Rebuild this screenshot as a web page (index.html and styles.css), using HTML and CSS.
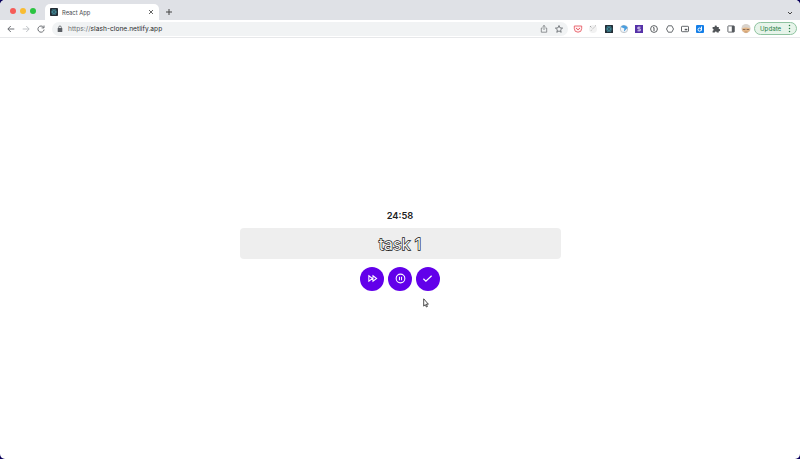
FILE: index.html
```html
<!DOCTYPE html>
<html lang="en">
<head>
<meta charset="utf-8">
<title>React App</title>
<link rel="stylesheet" href="styles.css">
</head>
<body>
<div class="window">
  <header class="tabs">
    <div class="lights"><i class="red"></i><i class="yellow"></i><i class="green"></i></div>
    <div class="tab">
      <svg class="favicon" viewBox="0 0 10 10"><rect width="10" height="10" rx="1" fill="#252d35"/><g fill="none" stroke="#4fa9b8" stroke-width=".6"><ellipse cx="5" cy="5" rx="3.6" ry="1.4"/><ellipse cx="5" cy="5" rx="3.6" ry="1.4" transform="rotate(60 5 5)"/><ellipse cx="5" cy="5" rx="3.6" ry="1.4" transform="rotate(120 5 5)"/></g></svg>
      <span class="tab-title">React App</span>
      <svg class="close" viewBox="0 0 6 6"><path d="M1 1l4 4M5 1L1 5" stroke="#555" stroke-width=".9"/></svg>
    </div>
    <svg class="plus" viewBox="0 0 8 8"><path d="M4 1v6M1 4h6" stroke="#444" stroke-width="1"/></svg>
    <svg class="chevron" viewBox="0 0 6 6"><path d="M1 2l2 2 2-2" fill="none" stroke="#444"/></svg>
  </header>
  <nav class="toolbar">
    <div class="nav">
      <svg viewBox="0 0 10 10"><path d="M8.3 5H2M4.8 2L1.8 5l3 3" fill="none" stroke="#5b5f64" stroke-width=".9"/></svg>
      <svg viewBox="0 0 10 10"><path d="M1.7 5H8M5.2 2l3 3-3 3" fill="none" stroke="#b8bbbf" stroke-width=".9"/></svg>
      <svg viewBox="0 0 10 10"><path d="M7.5 3.2A3.1 3.1 0 1 0 8.1 5.6M8 1.5v2.4H5.6" fill="none" stroke="#5b5f64" stroke-width=".9"/></svg>
    </div>
    <div class="address">
      <svg class="lock" viewBox="0 0 6 8"><rect x=".7" y="3" width="4.6" height="4" rx=".6" fill="#5b5f64"/><path d="M1.7 3.2V2.3a1.3 1.3 0 0 1 2.6 0v.9" fill="none" stroke="#5b5f64" stroke-width=".8"/></svg>
      <span class="url"><span class="scheme">https://</span>slash-clone.netlify.app</span>
      <svg class="share" viewBox="0 0 10 10"><path d="M3.6 4H2.3v4.2h5.4V4H6.4M5 6V1.5M3.5 2.8L5 1.4l1.5 1.4" fill="none" stroke="#777b7f" stroke-width=".8"/></svg>
      <svg class="star" viewBox="0 0 10 10"><path d="M5 1.5l1 2.4 2.6.2-2 1.7.6 2.5L5 6.9 2.8 8.3l.6-2.5-2-1.7L4 3.9z" fill="none" stroke="#5b5f64" stroke-width=".8"/></svg>
    </div>
    <div class="extensions">
      <svg viewBox="0 0 10 10"><path d="M1.3 2h7.4v2.6a3.7 3.6 0 0 1-7.4 0z" fill="#fff0f1" stroke="#e75c66" stroke-width=".9"/><path d="M3 4l2 1.8L7 4" fill="none" stroke="#e75c66"/></svg>
      <svg viewBox="0 0 10 10"><circle cx="5" cy="5" r="4" fill="#f2f2f2"/><path d="M2 2l1.3 1.4M6.8 2.4l1-.8M5 4.5l1-1M3.2 6.5l.6-.7" stroke="#999" stroke-width=".9"/></svg>
      <svg viewBox="0 0 10 10"><rect x="1" y="1" width="8" height="8" rx=".5" fill="#222c35"/><g fill="none" stroke="#4598a8" stroke-width=".6"><ellipse cx="5" cy="5" rx="3.2" ry="1.2"/><ellipse cx="5" cy="5" rx="3.2" ry="1.2" transform="rotate(60 5 5)"/><ellipse cx="5" cy="5" rx="3.2" ry="1.2" transform="rotate(120 5 5)"/></g></svg>
      <svg viewBox="0 0 10 10"><circle cx="5" cy="5" r="3.7" fill="#f4f7fa" stroke="#b5bbc1" stroke-width=".8"/><path d="M1.8 3a4 4 0 0 1 6.9.8L4.8 7.8l.6-3.4z" fill="#4b9fdf"/></svg>
      <svg viewBox="0 0 10 10"><rect x="1" y="1" width="8" height="8" fill="#5632a8"/><path d="M6.5 3.2H3.9v1.7h2.3v1.9H3.5" fill="none" stroke="#e4dcf5" stroke-width="1"/></svg>
      <svg viewBox="0 0 10 10"><circle cx="5" cy="5" r="3.4" fill="none" stroke="#4c5054" stroke-width=".9"/><path d="M4.2 3.6H5V7" fill="none" stroke="#4c5054" stroke-width="1"/></svg>
      <svg viewBox="0 0 10 10"><path d="M3.2 1.8h3.6L8.5 5 6.8 8.2H3.2L1.5 5z" fill="none" stroke="#55595d" stroke-width=".9"/></svg>
      <svg viewBox="0 0 10 10"><rect x="1.5" y="2.3" width="7" height="5.4" rx=".7" fill="none" stroke="#55595d" stroke-width=".9"/><path d="M4.7 4.8h2.6v1.5H4.7z" fill="#55595d"/></svg>
      <svg viewBox="0 0 10 10"><rect x="1" y="1" width="8" height="8" rx="1" fill="#147fe8"/><circle cx="4.6" cy="5.6" r="1.6" fill="none" stroke="#fff" stroke-width="1"/><path d="M6.5 2.5v4" stroke="#fff"/></svg>
      <svg viewBox="0 0 10 10"><path d="M1.6 3h2.1a1.1 1.1 0 1 1 2.1 0h2v2a1.1 1.1 0 1 1 0 2.1v1.5h-2a1 1 0 0 0-2 0H1.6V6.7a1 1 0 0 0 0-2z" fill="#505458"/></svg>
      <svg viewBox="0 0 10 10"><rect x="1.9" y="1.9" width="6.4" height="6.2" rx=".5" fill="none" stroke="#55595d" stroke-width=".9"/><path d="M5.8 2h2.4v6H5.8z" fill="#55595d"/></svg>
    </div>
    <svg class="avatar" viewBox="0 0 10 10"><circle cx="5" cy="4.6" r="4.6" fill="#d9d3cc"/><path d="M1.2 4.3Q5 2.5 8.8 4.3v2.4Q5 11 1.2 6.7z" fill="#e5b98b"/><path d="M1.8 5h2.6v1H1.8zM5.6 5h2.6v1H5.6z" fill="#8a6c55"/><path d="M3.5 8h3" stroke="#b98255" stroke-width=".7"/></svg>
    <div class="update"><span>Update</span><svg viewBox="0 0 3 9"><g fill="#277d45"><circle cx="1.5" cy="1.5" r=".75"/><circle cx="1.5" cy="4.5" r=".75"/><circle cx="1.5" cy="7.5" r=".75"/></g></svg></div>
  </nav>
  <main>
    <div class="timer">24:58</div>
    <div class="task">task 1</div>
    <div class="controls">
      <button><svg viewBox="0 0 24 24"><path d="M4 6l8 6-8 6zM13 6l8 6-8 6z" fill="none" stroke="#fff" stroke-width="2.2"/></svg></button>
      <button><svg viewBox="0 0 24 24"><circle cx="12" cy="12" r="9.5" fill="none" stroke="#fff" stroke-width="2.3"/><path d="M9.7 8v8M14.3 8v8" stroke="#fff" stroke-width="2.2"/></svg></button>
      <button><svg viewBox="0 0 24 24"><path d="M3 12.5l5.5 5.5L21 6" fill="none" stroke="#fff" stroke-width="2.6"/></svg></button>
    </div>
  </main>
</div>
<svg class="cursor" viewBox="0 0 6 10"><path d="M.7.8v7.3l1.6-1.5 1.1 2.4 1-.5-1-2.3h2z" fill="#fff" stroke="#222" stroke-width=".8"/></svg>
</body>
</html>
```
FILE: styles.css
```css
* { box-sizing: border-box; }
body { margin: 0; background: #09005b; font-family: Inter, "Liberation Sans", sans-serif; }
svg { display: block; flex: none; }
.window { height: 459px; display: flex; flex-direction: column; background: #fff; border-radius: 5px; overflow: hidden; }
.tabs { height: 20px; flex: none; display: flex; align-items: center; padding: 0 7px 0 10px; background: #dfe1e6; }
.lights { display: flex; gap: 4px; width: 35px; padding-top: 1px; }
.lights i { width: 6px; height: 6px; border-radius: 50%; }
.red { background: #f65b57; }
.yellow { background: #f9bc32; }
.green { background: #2bc441; }
.tab { width: 114px; height: 16px; align-self: flex-end; display: flex; align-items: center; padding: 0 5px 0 5px; background: #fff; border-radius: 5px 5px 0 0; }
.favicon { width: 8px; height: 8px; }
.tab-title { margin-left: 4px; font-size: 5.8px; color: #45494d; }
.close { width: 6px; height: 6px; margin-left: auto; }
.plus { width: 8px; height: 8px; margin: 4px 0 0 6px; }
.chevron { width: 6px; height: 6px; margin: 5px 0 0 auto; }
.toolbar { height: 18px; flex: none; display: flex; align-items: center; padding: 0 3px 0 6px; border-bottom: 1px solid #e7e8ea; }
.nav { display: flex; gap: 5px; }
.nav svg { width: 10px; height: 10px; }
.address { width: 516px; height: 14px; margin-left: 6px; display: flex; align-items: center; padding: 0 4px 0 5px; background: #f1f3f4; border-radius: 7px; }
.lock { width: 6px; height: 8px; }
.url { margin-left: 5px; font-size: 6.6px; letter-spacing: .04px; color: #25282b; }
.scheme { color: #686c70; }
.share { width: 10px; height: 10px; margin-left: auto; }
.star { width: 10px; height: 10px; margin-left: 5px; }
.extensions { display: flex; gap: 5.3px; margin-left: 5px; }
.extensions svg { width: 10px; height: 10px; }
.avatar { width: 10px; height: 10px; margin-left: 5px; }
.update { width: 43px; height: 13px; margin-left: auto; display: flex; align-items: center; justify-content: space-between; padding: 0 5px 0 5px; border: 1px solid #8fc3a0; border-radius: 7px; background: #e7f4ea; color: #277d45; font-size: 6.2px; }
.update svg { width: 3px; height: 9px; }
main { flex: 1; display: flex; flex-direction: column; align-items: center; padding-top: 172px; }
.timer { height: 12px; font-size: 9.3px; line-height: 12px; font-weight: 600; color: #222; }
.task { width: 321px; height: 31px; margin-top: 6px; border-radius: 4px; background: #eee; text-align: center; font-size: 16px; line-height: 32px; color: #f6f6f6; -webkit-text-stroke: 1.3px #111; paint-order: stroke fill; }
.controls { display: flex; gap: 3.6px; margin-top: 7.5px; }
.controls button { width: 24px; height: 24px; padding: 0; border: 0; border-radius: 50%; display: grid; place-items: center; background: #6200ea; }
.controls svg { width: 11px; height: 11px; }
.cursor { position: absolute; left: 423px; top: 298px; width: 6px; height: 10px; }
```
